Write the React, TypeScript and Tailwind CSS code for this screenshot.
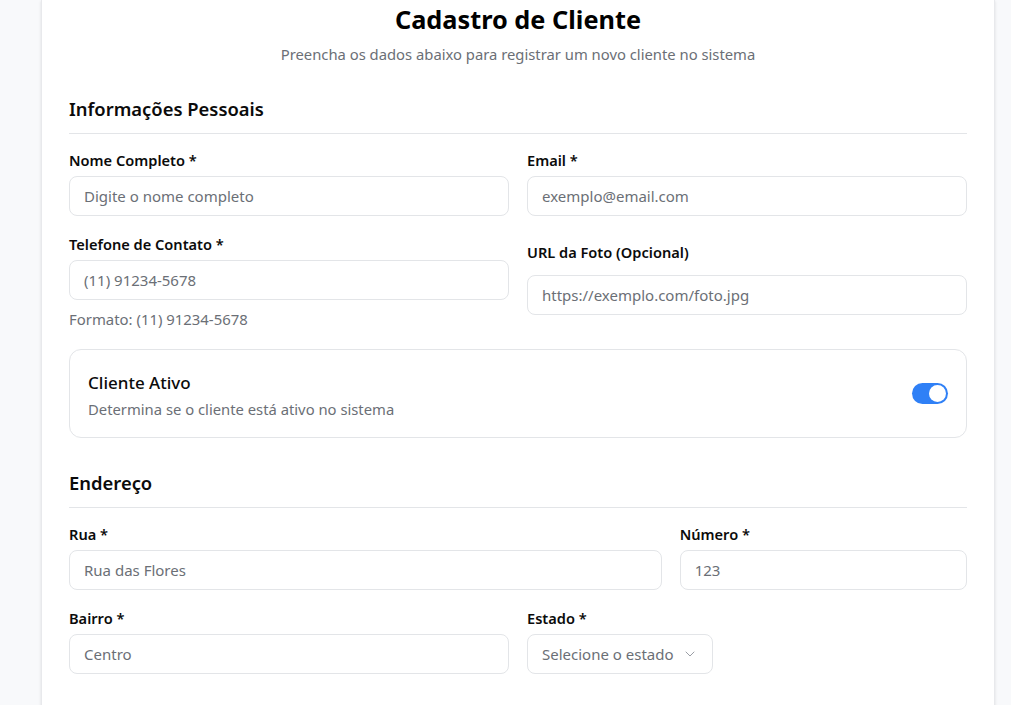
import { ChevronDown } from "lucide-react";

function Label({ children }: { children: React.ReactNode }) {
  return <label className="mb-1.5 block text-[14.6px] font-semibold leading-5 text-[#0b0b0b]">{children}</label>;
}

function Input({ placeholder }: { placeholder: string }) {
  return (
    <input
      type="text"
      placeholder={placeholder}
      className="h-10 w-full rounded-lg border border-[#e3e5e8] bg-white px-[14px] text-[15px] text-gray-900 outline-none placeholder:text-[#6b6f76]"
    />
  );
}

function Field({ label, placeholder }: { label: string; placeholder: string }) {
  return (
    <div>
      <Label>{label}</Label>
      <Input placeholder={placeholder} />
    </div>
  );
}

function SectionTitle({ children }: { children: React.ReactNode }) {
  return (
    <h2 className="mb-4 border-b border-[#e3e5e8] pb-[10px] text-[18.4px] font-semibold leading-7 text-[#0b0b0b]">
      {children}
    </h2>
  );
}

export default function App() {
  return (
    <div
      className="min-h-screen bg-[#f8f9fb]"
      style={{ fontFamily: '"Noto Sans", "Open Sans", sans-serif' }}
    >
      <div className="ml-[41px] w-[954px] border-x border-[#e8e9ec] bg-white px-[27px] pb-10 pt-[3px] shadow-sm">
        <h1 className="text-center text-[25.3px] font-bold leading-8 text-black">Cadastro de Cliente</h1>
        <p className="mt-[9px] text-center text-[14.8px] leading-5 text-[#6b6f76]">
          Preencha os dados abaixo para registrar um novo cliente no sistema
        </p>

        <div className="mt-[31px]">
          <SectionTitle>Informações Pessoais</SectionTitle>
          <div className="grid grid-cols-2 items-start gap-x-[18px] gap-y-[18px]">
            <Field label="Nome Completo *" placeholder="Digite o nome completo" />
            <Field label="Email *" placeholder="exemplo@email.com" />
            <div>
              <Field label="Telefone de Contato *" placeholder="(11) 91234-5678" />
              <p className="mt-[9px] text-[14.9px] leading-5 text-[#6b6f76]">Formato: (11) 91234-5678</p>
            </div>
            <div className="pt-2">
              <label className="mb-[13px] block text-[14.6px] font-semibold leading-5 text-[#0b0b0b]">
                URL da Foto (Opcional)
              </label>
              <Input placeholder="https://exemplo.com/foto.jpg" />
            </div>
          </div>

          <div className="mt-5 flex h-[89px] items-center justify-between rounded-xl border border-[#e3e5e8] px-[18px]">
            <div className="mt-0.5">
              <p className="text-[17px] font-medium leading-6 text-[#0b0b0b]">Cliente Ativo</p>
              <p className="mt-1 text-[14.8px] leading-5 text-[#6b6f76]">
                Determina se o cliente está ativo no sistema
              </p>
            </div>
            <button
              type="button"
              className="flex h-[21px] w-9 items-center justify-end rounded-full bg-[#2f80f6] px-0.5"
            >
              <span className="h-[17px] w-[17px] rounded-full bg-white" />
            </button>
          </div>
        </div>

        <div className="mt-[31px]">
          <SectionTitle>Endereço</SectionTitle>
          <div className="grid grid-cols-3 gap-x-[18px]">
            <div className="col-span-2">
              <Field label="Rua *" placeholder="Rua das Flores" />
            </div>
            <Field label="Número *" placeholder="123" />
          </div>
          <div className="mt-[18px] grid grid-cols-2 gap-x-[18px]">
            <Field label="Bairro *" placeholder="Centro" />
            <div>
              <Label>Estado *</Label>
              <button
                type="button"
                className="flex h-10 items-center gap-2 rounded-lg border border-[#e3e5e8] bg-white pl-[14px] pr-[14px] text-[15px] text-[#6b6f76]"
              >
                Selecione o estado
                <ChevronDown className="h-4 w-4 text-[#9a9ea5]" strokeWidth={1.5} />
              </button>
            </div>
          </div>
        </div>
      </div>
    </div>
  );
}
